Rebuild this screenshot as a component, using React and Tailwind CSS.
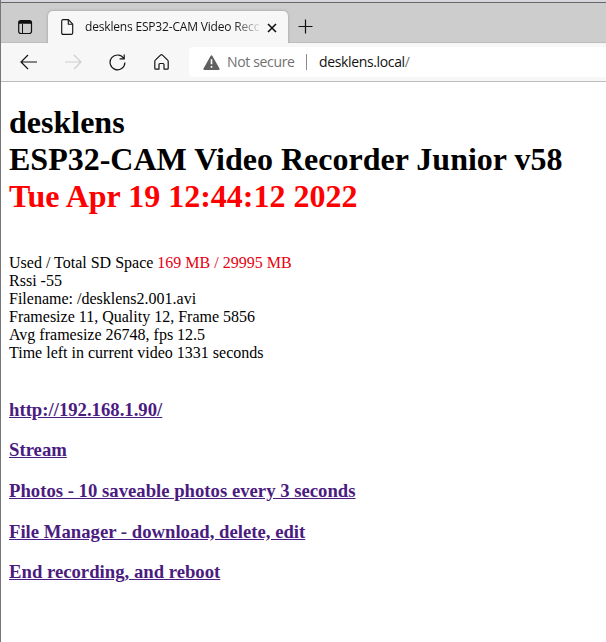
function TabStrip() {
  return (
    <div className="flex h-[40px] items-end bg-[#cdcdcd] shadow-[inset_0_-1px_0_#bdbdbd]">
      <div className="flex h-[32px] w-[47px] pl-[17px] pt-[9px]">
        <svg width="15" height="15" viewBox="0 0 15 15" fill="none" stroke="#111">
          <rect x=".7" y=".7" width="12.8" height="12.8" rx="2.2" strokeWidth="1.2" />
          <path d="M1 3.2V2.5Q1 1 2.5 1h9.2q1.5 0 1.5 1.5v.7z" fill="#111" />
          <path d="M4.5 4v9.5" />
        </svg>
      </div>
      <div className="flex h-[32px] w-[240px] items-center rounded-t-[5px] bg-[#f7f7f7] shadow-[0_0_3px_#999] [clip-path:inset(-4px_-4px_0_-4px)]">
        <svg className="ml-[13px] shrink-0" width="13" height="16" viewBox="0 0 13 16" fill="none" stroke="#151515" strokeWidth="1.15" strokeLinejoin="round">
          <path d="M2.2.6h5.2l4.3 4.5v8.7q0 1.6-1.6 1.6H2.2Q.7 15.4.7 13.8V2.1Q.7.6 2.2.6z" />
          <path d="M7.3.8v4.4h4.3" />
        </svg>
        <div className="ml-[11px] w-[174px] shrink-0 whitespace-nowrap text-[12px] leading-[18px] tracking-[-0.18px] text-[#151515] [mask-image:linear-gradient(to_right,black_148px,transparent_178px)]">
          desklens ESP32-CAM Video Reco
        </div>
        <svg className="ml-[8px] mt-[1px] shrink-0" width="10" height="10" viewBox="0 0 10 10" stroke="#111" strokeWidth="1.6">
          <path d="M1 1l8 8M9 1L1 9" />
        </svg>
      </div>
      <svg className="mb-[9px] ml-[10px]" width="15" height="15" viewBox="0 0 15 15" stroke="#111" strokeWidth="1.2">
        <path d="M7.5.5v14M.5 7.5h14" />
      </svg>
    </div>
  );
}

function Toolbar() {
  return (
    <div className="flex h-[39px] items-center border-b border-[#bcbcbc] bg-[#f7f7f7]">
      <svg className="ml-[19px] shrink-0" width="18" height="16" viewBox="0 0 18 16" fill="none" stroke="#151515" strokeWidth="1.2">
        <path d="M17 8H1.2M8 1L1 8l7 7" />
      </svg>
      <svg className="ml-[26px] shrink-0" width="18" height="16" viewBox="0 0 18 16" fill="none" stroke="#cecece" strokeWidth="1.2">
        <path d="M1 8h15.8M10 1l7 7-7 7" />
      </svg>
      <svg className="ml-[27px] shrink-0" width="17" height="17" viewBox="0 0 17 17" fill="none" stroke="#151515" strokeWidth="1.2">
        <path d="M14.8 4.5A7.4 7.4 0 1 0 15.9 8.5M15.2.6v4.3h-4.6" />
      </svg>
      <svg className="ml-[28px] shrink-0" width="15" height="16" viewBox="0 0 15 16" fill="none" stroke="#151515" strokeWidth="1.2" strokeLinejoin="round">
        <path d="M.8 7.2q0-.7.5-1.1L6.5 1.1q1-.8 2 0l5.2 5q.5.4.5 1.1v7q0 .9-.9.9H10V10.5q0-1-1-1H6q-1 0-1 1v4.6H1.7q-.9 0-.9-.9z" />
      </svg>
      <div className="ml-[20px] flex h-[30px] flex-1 items-center rounded-l-[4px] bg-white text-[14px] leading-[20px]">
        <svg className="ml-[14px] shrink-0" width="17" height="15" viewBox="0 0 17 15">
          <path d="M8.5 1.2L15.7 14H1.3z" fill="#606060" stroke="#606060" strokeWidth="1.8" strokeLinejoin="round" />
          <path d="M8.5 4.3v5M8.5 11v1.8" stroke="white" strokeWidth="1.6" />
        </svg>
        <span className="ml-[7px] w-[68px] shrink-0 whitespace-nowrap tracking-[-0.34px] text-[#707070]">Not secure</span>
        <span className="ml-[11px] h-[16px] w-px bg-[#8b8b8b]" />
        <span className="ml-[12px] whitespace-nowrap tracking-[-0.36px] text-[#111]">
          desklens.local<span className="text-[#777]">/</span>
        </span>
      </div>
    </div>
  );
}

const links = [
  "http://192.168.1.90/",
  "Stream",
  "Photos - 10 saveable photos every 3 seconds",
  "File Manager - download, delete, edit",
  "End recording, and reboot",
];

export default function App() {
  return (
    <div className="h-[642px] w-[606px] overflow-hidden border-l border-[#777] bg-white">
      <div className="font-['Open_Sans','Noto_Sans',sans-serif]">
        <div className="h-[3px] border-b border-[#666] bg-[#d5d7dc]" />
        <TabStrip />
        <Toolbar />
      </div>
      <main className="pl-[8px] pt-[22px] font-['Liberation_Serif',serif] text-[16px] leading-[18px] text-black">
        <h1 className="whitespace-nowrap text-[32px] font-bold leading-[37px]">
          desklens
          <br />
          ESP32-CAM Video Recorder Junior v58
          <br />
          <span className="text-[#ff0000]">Tue Apr 19 12:44:12 2022</span>
        </h1>
        <div className="mt-[39px] whitespace-nowrap">
          <p>
            Used / Total SD Space <span className="text-[#e60012]">169 MB / 29995 MB</span>
          </p>
          <p>Rssi -55</p>
          <p>Filename: /desklens2.001.avi</p>
          <p>Framesize 11, Quality 12, Frame 5856</p>
          <p>Avg framesize 26748, fps 12.5</p>
          <p>Time left in current video 1331 seconds</p>
        </div>
        <div className="mt-[36.8px] flex flex-col gap-[19.6px]">
          {links.map((label) => (
            <h3 key={label} className="whitespace-nowrap text-[18.72px] font-bold leading-[21px]">
              <a href="#" className="text-[#4b1c80] underline">{label}</a>
            </h3>
          ))}
        </div>
      </main>
    </div>
  );
}
